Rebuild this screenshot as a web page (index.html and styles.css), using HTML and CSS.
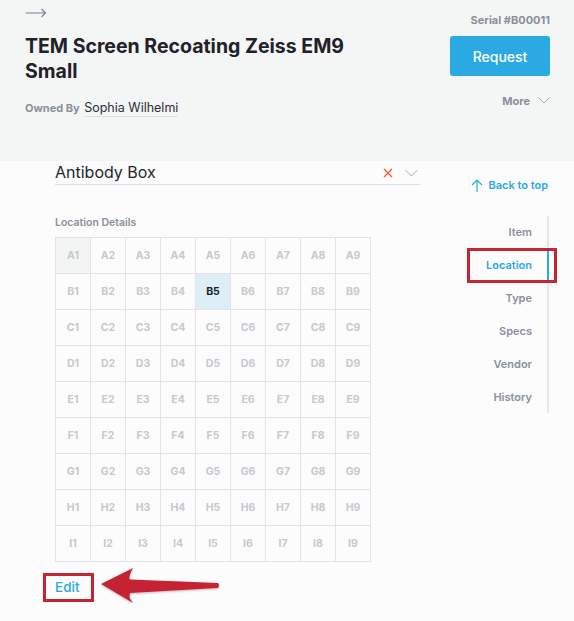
FILE: index.html
```html
<!DOCTYPE html>
<html>
<head>
<meta charset="utf-8">
<link rel="stylesheet" href="styles.css">
</head>
<body>
<div class="header">
  <div class="head-left">
    <svg class="back-arrow" width="22" height="10" viewBox="0 0 22 10"><path d="M0.5 5 H20.5 M16.5 1 L20.5 5 L16.5 9" fill="none" stroke="#7b8494" stroke-width="1.2"/></svg>
    <h1 class="title">TEM Screen Recoating Zeiss EM9 Small</h1>
    <div class="owner"><span class="owner-label">Owned By</span> <span class="owner-name">Sophia Wilhelmi</span></div>
  </div>
  <div class="head-right">
    <div class="serial">Serial #B00011</div>
    <button class="request">Request</button>
    <div class="more">More <svg width="12" height="7" viewBox="0 0 12 7"><path d="M0.5 0.5 L6 6 L11.5 0.5" fill="none" stroke="#a7adb7" stroke-width="1"/></svg></div>
  </div>
</div>
<div class="content">
  <div class="main">
    <div class="select">
      <span class="select-value">Antibody Box</span>
      <span class="select-icons">
        <svg width="10" height="10" viewBox="0 0 10 10"><path d="M1 1 L9 9 M9 1 L1 9" stroke="#f0602f" stroke-width="1.4"/></svg>
        <svg width="13" height="8" viewBox="0 0 13 8"><path d="M0.5 1 L6.5 7 L12.5 1" fill="none" stroke="#a7adb7" stroke-width="1"/></svg>
      </span>
    </div>
    <div class="section-label">Location Details</div>
    <div class="grid" id="grid"></div>
    <div class="edit">Edit</div>
  </div>
  <div class="side">
    <div class="back-top"><svg width="12" height="13" viewBox="0 0 12 13"><path d="M6 13 V1 M1 6 L6 1 L11 6" fill="none" stroke="#2aa9e0" stroke-width="1.2"/></svg> Back to top</div>
    <ul class="nav">
      <li>Item</li>
      <li class="active">Location</li>
      <li>Type</li>
      <li>Specs</li>
      <li>Vendor</li>
      <li>History</li>
    </ul>
  </div>
</div>
<div class="annot annot-loc"></div>
<div class="annot annot-edit"></div>
<svg class="annot-arrow" width="130" height="45" viewBox="0 0 130 45">
  <defs><filter id="sh" x="-10%" y="-20%" width="120%" height="150%"><feDropShadow dx="0" dy="1" stdDeviation="1" flood-color="#000" flood-opacity="0.25"/></filter></defs>
  <path filter="url(#sh)" d="M2 24 L34 8 Q29 17 31 19.5 L119 23 Q121 25 119 28 L31 33 Q29 37 34 43 Z" fill="#c52433"/>
</svg>
<script>
var g=document.getElementById('grid');
var rows='ABCDEFGHI';
for(var r=0;r<9;r++){for(var c=1;c<=9;c++){var d=document.createElement('div');d.className='cell';var n=rows[r]+c;if(n==='A1')d.className+=' first';if(n==='B5')d.className+=' sel';d.textContent=n;g.appendChild(d);}}
</script>
</body>
</html>
```
FILE: styles.css
```css
* { box-sizing: border-box; }
html, body { margin: 0; padding: 0; }
body { width: 574px; height: 621px; background: #fcfcfc; font-family: "Inter", "Open Sans", sans-serif; color: #1f2228; position: relative; overflow: hidden; }
.header { height: 161px; background: #f4f5f5; display: flex; justify-content: space-between; padding: 7px 24px 0 25px; }
.head-left { display: flex; flex-direction: column; }
.back-arrow { display: block; margin-top: 1px; }
.title { font-size: 19.5px; font-weight: 700; line-height: 25px; margin: 16px 0 0 0; width: 350px; color: #1f2228; letter-spacing: 0; }
.owner { margin-top: 16px; font-size: 12.5px; }
.owner-label { font-size: 11px; font-weight: 700; color: #8a909b; }
.owner-name { color: #2b2f36; border-bottom: 1px solid #dcdfe3; padding-bottom: 1px; margin-left: 1px; }
.head-right { display: flex; flex-direction: column; align-items: flex-end; }
.serial { font-size: 11px; font-weight: 700; color: #8a909b; margin-top: 6px; }
.request { margin-top: 9px; width: 100px; height: 40px; background: #2aa9e2; border: none; border-radius: 3px; color: #fff; font-family: inherit; font-size: 14px; font-weight: 500; }
.more { margin-top: 18px; font-size: 11px; font-weight: 700; color: #8a909b; display: flex; align-items: center; gap: 8px; }
.more svg { margin-top: -2px; }
.content { display: flex; }
.main { margin-left: 55px; width: 365px; }
.select { display: flex; justify-content: space-between; align-items: center; border-bottom: 1px solid #dcdfe3; height: 24px; margin-top: 0; }
.select-value { font-size: 16px; color: #22252b; margin-top: -1px; }
.select-icons { display: flex; align-items: center; gap: 12px; padding-right: 2px; }
.section-label { font-size: 10.5px; font-weight: 600; color: #8a909b; margin-top: 31px; }
.grid { margin-top: 8px; display: grid; grid-template-columns: repeat(9, 35px); grid-auto-rows: 36px; width: 316px; border-top: 1px solid #e3e4e7; border-left: 1px solid #e3e4e7; }
.cell { border-right: 1px solid #e3e4e7; border-bottom: 1px solid #e3e4e7; display: flex; align-items: center; justify-content: center; font-size: 10.5px; font-weight: 700; color: #c6c9ce; }
.cell.first { background: #f3f4f4; }
.cell.sel { background: #ddeef7; color: #1f2228; }
.edit { margin-left: 0; margin-top: 17px; font-size: 13.5px; font-weight: 500; color: #2aa9e2; }
.side { margin-left: 48px; width: 81px; display: flex; flex-direction: column; }
.back-top { margin-top: 17px; font-size: 11px; font-weight: 600; color: #2aa9e2; display: flex; align-items: center; gap: 5px; white-space: nowrap; justify-content: flex-end; margin-right: 1px; }
.nav { list-style: none; margin: 24px 0 0 0; padding: 0; border-right: 2px solid #e6e7ea; width: 81px; height: 197px; }
.nav li { height: 33px; line-height: 33px; text-align: right; padding-right: 15px; font-size: 11px; font-weight: 600; color: #8a909b; position: relative; }
.nav li.active { color: #2aa9e2; }
.nav li.active::after { content: ""; position: absolute; right: -2px; top: 0; width: 2px; height: 100%; background: #2aa9e2; }
.annot { position: absolute; border: 3px solid #c52433; }
.annot-loc { left: 467px; top: 248px; width: 90px; height: 35px; }
.annot-edit { left: 43px; top: 573px; width: 51px; height: 29px; }
.annot-arrow { position: absolute; left: 99px; top: 560px; }
```
